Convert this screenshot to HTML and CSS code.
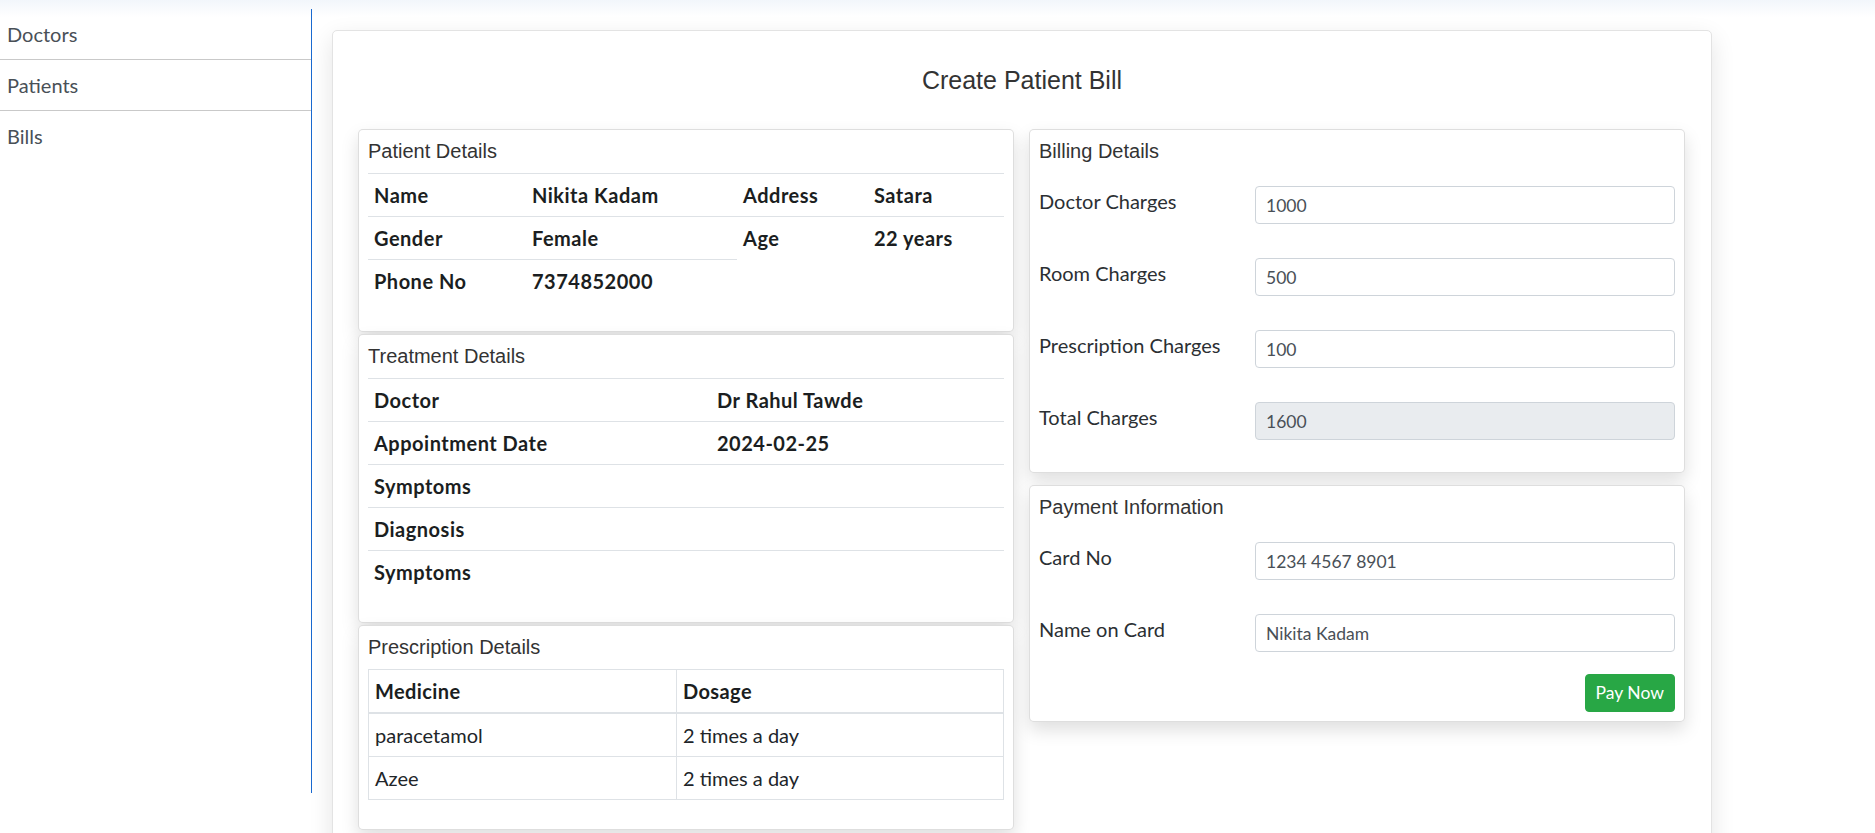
FILE: index.html
```html
<!DOCTYPE html>
<html lang="en">
<head>
<meta charset="utf-8">
<title>Create Patient Bill</title>
<link rel="stylesheet" href="styles.css">
</head>
<body>
<div class="layout">
  <nav class="sidebar">
    <ul class="nav-list">
      <li><a class="nav-link" href="#">Doctors</a></li>
      <li><a class="nav-link" href="#">Patients</a></li>
      <li><a class="nav-link" href="#">Bills</a></li>
    </ul>
  </nav>
  <main class="main">
    <section class="page-card">
      <h4 class="page-title">Create Patient Bill</h4>
      <div class="columns">
        <div class="col-stack col-left">
          <div class="card">
            <h5 class="card-title">Patient Details</h5>
            <div class="patient-grid">
              <table class="info-table t-patient-a">
                <tr><td class="c-key">Name</td><td>Nikita Kadam</td></tr>
                <tr><td class="c-key">Gender</td><td>Female</td></tr>
                <tr><td class="c-key">Phone No</td><td>7374852000</td></tr>
              </table>
              <table class="info-table t-patient-b">
                <tr><td class="c-key">Address</td><td>Satara</td></tr>
                <tr><td class="c-key">Age</td><td>22 years</td></tr>
              </table>
            </div>
          </div>
          <div class="card">
            <h5 class="card-title">Treatment Details</h5>
            <table class="info-table t-treatment">
              <tr><td class="c-key">Doctor</td><td>Dr Rahul Tawde</td></tr>
              <tr><td class="c-key">Appointment Date</td><td>2024-02-25</td></tr>
              <tr><td class="c-key">Symptoms</td><td></td></tr>
              <tr><td class="c-key">Diagnosis</td><td></td></tr>
              <tr><td class="c-key">Symptoms</td><td></td></tr>
            </table>
          </div>
          <div class="card">
            <h5 class="card-title">Prescription Details</h5>
            <table class="rx-table">
              <thead>
                <tr><th class="c-med">Medicine</th><th>Dosage</th></tr>
              </thead>
              <tbody>
                <tr><td>paracetamol</td><td>2 times a day</td></tr>
                <tr><td>Azee</td><td>2 times a day</td></tr>
              </tbody>
            </table>
          </div>
        </div>
        <div class="col-stack col-right">
          <div class="card">
            <h5 class="card-title">Billing Details</h5>
            <form class="form form-billing">
              <div class="form-row">
                <label class="form-label">Doctor Charges</label>
                <input class="form-input" type="text" value="1000">
              </div>
              <div class="form-row">
                <label class="form-label">Room Charges</label>
                <input class="form-input" type="text" value="500">
              </div>
              <div class="form-row">
                <label class="form-label">Prescription Charges</label>
                <input class="form-input" type="text" value="100">
              </div>
              <div class="form-row">
                <label class="form-label">Total Charges</label>
                <input class="form-input is-readonly" type="text" value="1600" readonly>
              </div>
            </form>
          </div>
          <div class="card">
            <h5 class="card-title">Payment Information</h5>
            <form class="form">
              <div class="form-row">
                <label class="form-label">Card No</label>
                <input class="form-input" type="text" value="1234 4567 8901">
              </div>
              <div class="form-row">
                <label class="form-label">Name on Card</label>
                <input class="form-input" type="text" value="Nikita Kadam">
              </div>
              <div class="form-actions">
                <button class="btn-pay" type="button">Pay Now</button>
              </div>
            </form>
          </div>
        </div>
      </div>
    </section>
  </main>
</div>
</body>
</html>
```
FILE: styles.css
```css
* { box-sizing: border-box; }

html, body { margin: 0; padding: 0; }

body {
  font-family: Lato, "Open Sans", "Liberation Sans", sans-serif;
  font-size: 20px;
  color: #212529;
  background: #fff linear-gradient(to bottom, #f2f6fb 0, #ffffff 17px) no-repeat;
  min-height: 833px;
  overflow: hidden;
}

.layout {
  display: flex;
  align-items: flex-start;
}

/* Sidebar */
.sidebar {
  width: 312px;
  flex: 0 0 312px;
  height: 784px;
  margin-top: 9px;
  border-right: 1px solid #1a6ad0;
}

.nav-list {
  list-style: none;
  margin: 0;
  padding: 0;
}

.nav-link {
  display: block;
  padding: 10px 7px;
  line-height: 30px;
  font-size: 20px;
  color: #495057;
  text-decoration: none;
  border-bottom: 1px solid #c9c9c9;
}

.nav-list li:last-child .nav-link { border-bottom: 0; }

/* Main */
.main {
  padding: 30px 0 0 20px;
}

.page-card {
  width: 1380px;
  background: #fff;
  border: 1px solid #e3e3e3;
  border-radius: 5px;
  padding: 0 25px 30px;
  box-shadow: 0 8px 24px rgba(0, 0, 0, 0.11);
}

.page-title {
  margin: 0 0 34px;
  padding-top: 34px;
  font-family: "Liberation Sans", Arial, sans-serif;
  font-weight: 400;
  font-size: 25px;
  line-height: 30px;
  color: #333;
  text-align: center;
}

.columns {
  display: grid;
  grid-template-columns: 656px 656px;
  column-gap: 15px;
  align-items: start;
}

.col-stack {
  display: flex;
  flex-direction: column;
}

.col-left { gap: 2px; }
.col-right { gap: 12px; }

.card {
  background: #fff;
  border: 1px solid rgba(0, 0, 0, 0.13);
  border-radius: 5px;
  padding: 9px;
  box-shadow: 0 8px 18px rgba(0, 0, 0, 0.13);
}

.card-title {
  margin: 0 0 10px;
  font-family: "Liberation Sans", Arial, sans-serif;
  font-weight: 400;
  font-size: 20px;
  line-height: 24px;
  color: #333;
}

/* Info tables */
.patient-grid {
  display: grid;
  grid-template-columns: 369px 1fr;
  align-items: start;
}

.info-table {
  width: 100%;
  border-collapse: collapse;
  margin-bottom: 20px;
}

.info-table td {
  padding: 6px;
  line-height: 30px;
  font-weight: 700;
  letter-spacing: 0.5px;
  color: #1b1e21;
  border-top: 1px solid #dee2e6;
  vertical-align: top;
}

.t-patient-a .c-key { width: 158px; }
.t-patient-b .c-key { width: 131px; }
.t-treatment .c-key { width: 343px; }

/* Prescription table */
.rx-table {
  width: 100%;
  border-collapse: collapse;
  margin-bottom: 20px;
  border: 1px solid #dee2e6;
}

.rx-table th,
.rx-table td {
  padding: 6px;
  line-height: 30px;
  border: 1px solid #dee2e6;
  text-align: left;
  vertical-align: top;
}

.rx-table th {
  font-weight: 700;
  letter-spacing: 0.4px;
  color: #1b1e21;
  border-bottom: 2px solid #dee2e6;
}

.rx-table .c-med { width: 308px; }

/* Forms */
.form {
  margin: 23px 0 0;
  display: flex;
  flex-direction: column;
  gap: 34px;
}

.form-billing { padding-bottom: 23px; }

.form-row {
  display: grid;
  grid-template-columns: 216px 1fr;
  align-items: start;
}

.form-label {
  line-height: 30px;
  font-size: 20px;
  color: #2b2f33;
}

.form-input {
  display: block;
  width: 100%;
  height: 38px;
  padding: 5px 10px;
  font-family: Lato, "Open Sans", "Liberation Sans", sans-serif;
  font-size: 17.5px;
  line-height: 26px;
  color: #495057;
  background: #fff;
  border: 1px solid #ced4da;
  border-radius: 4px;
  outline: none;
}

.form-input.is-readonly {
  background: #e9ecef;
}

.form-actions {
  display: flex;
  justify-content: flex-end;
  margin-top: -12px;
}

.btn-pay {
  height: 38px;
  padding: 5px 10px;
  font-family: Lato, "Open Sans", "Liberation Sans", sans-serif;
  font-size: 17.5px;
  line-height: 26px;
  color: #fff;
  background: #28a745;
  border: 1px solid #28a745;
  border-radius: 4px;
  cursor: pointer;
}
```
